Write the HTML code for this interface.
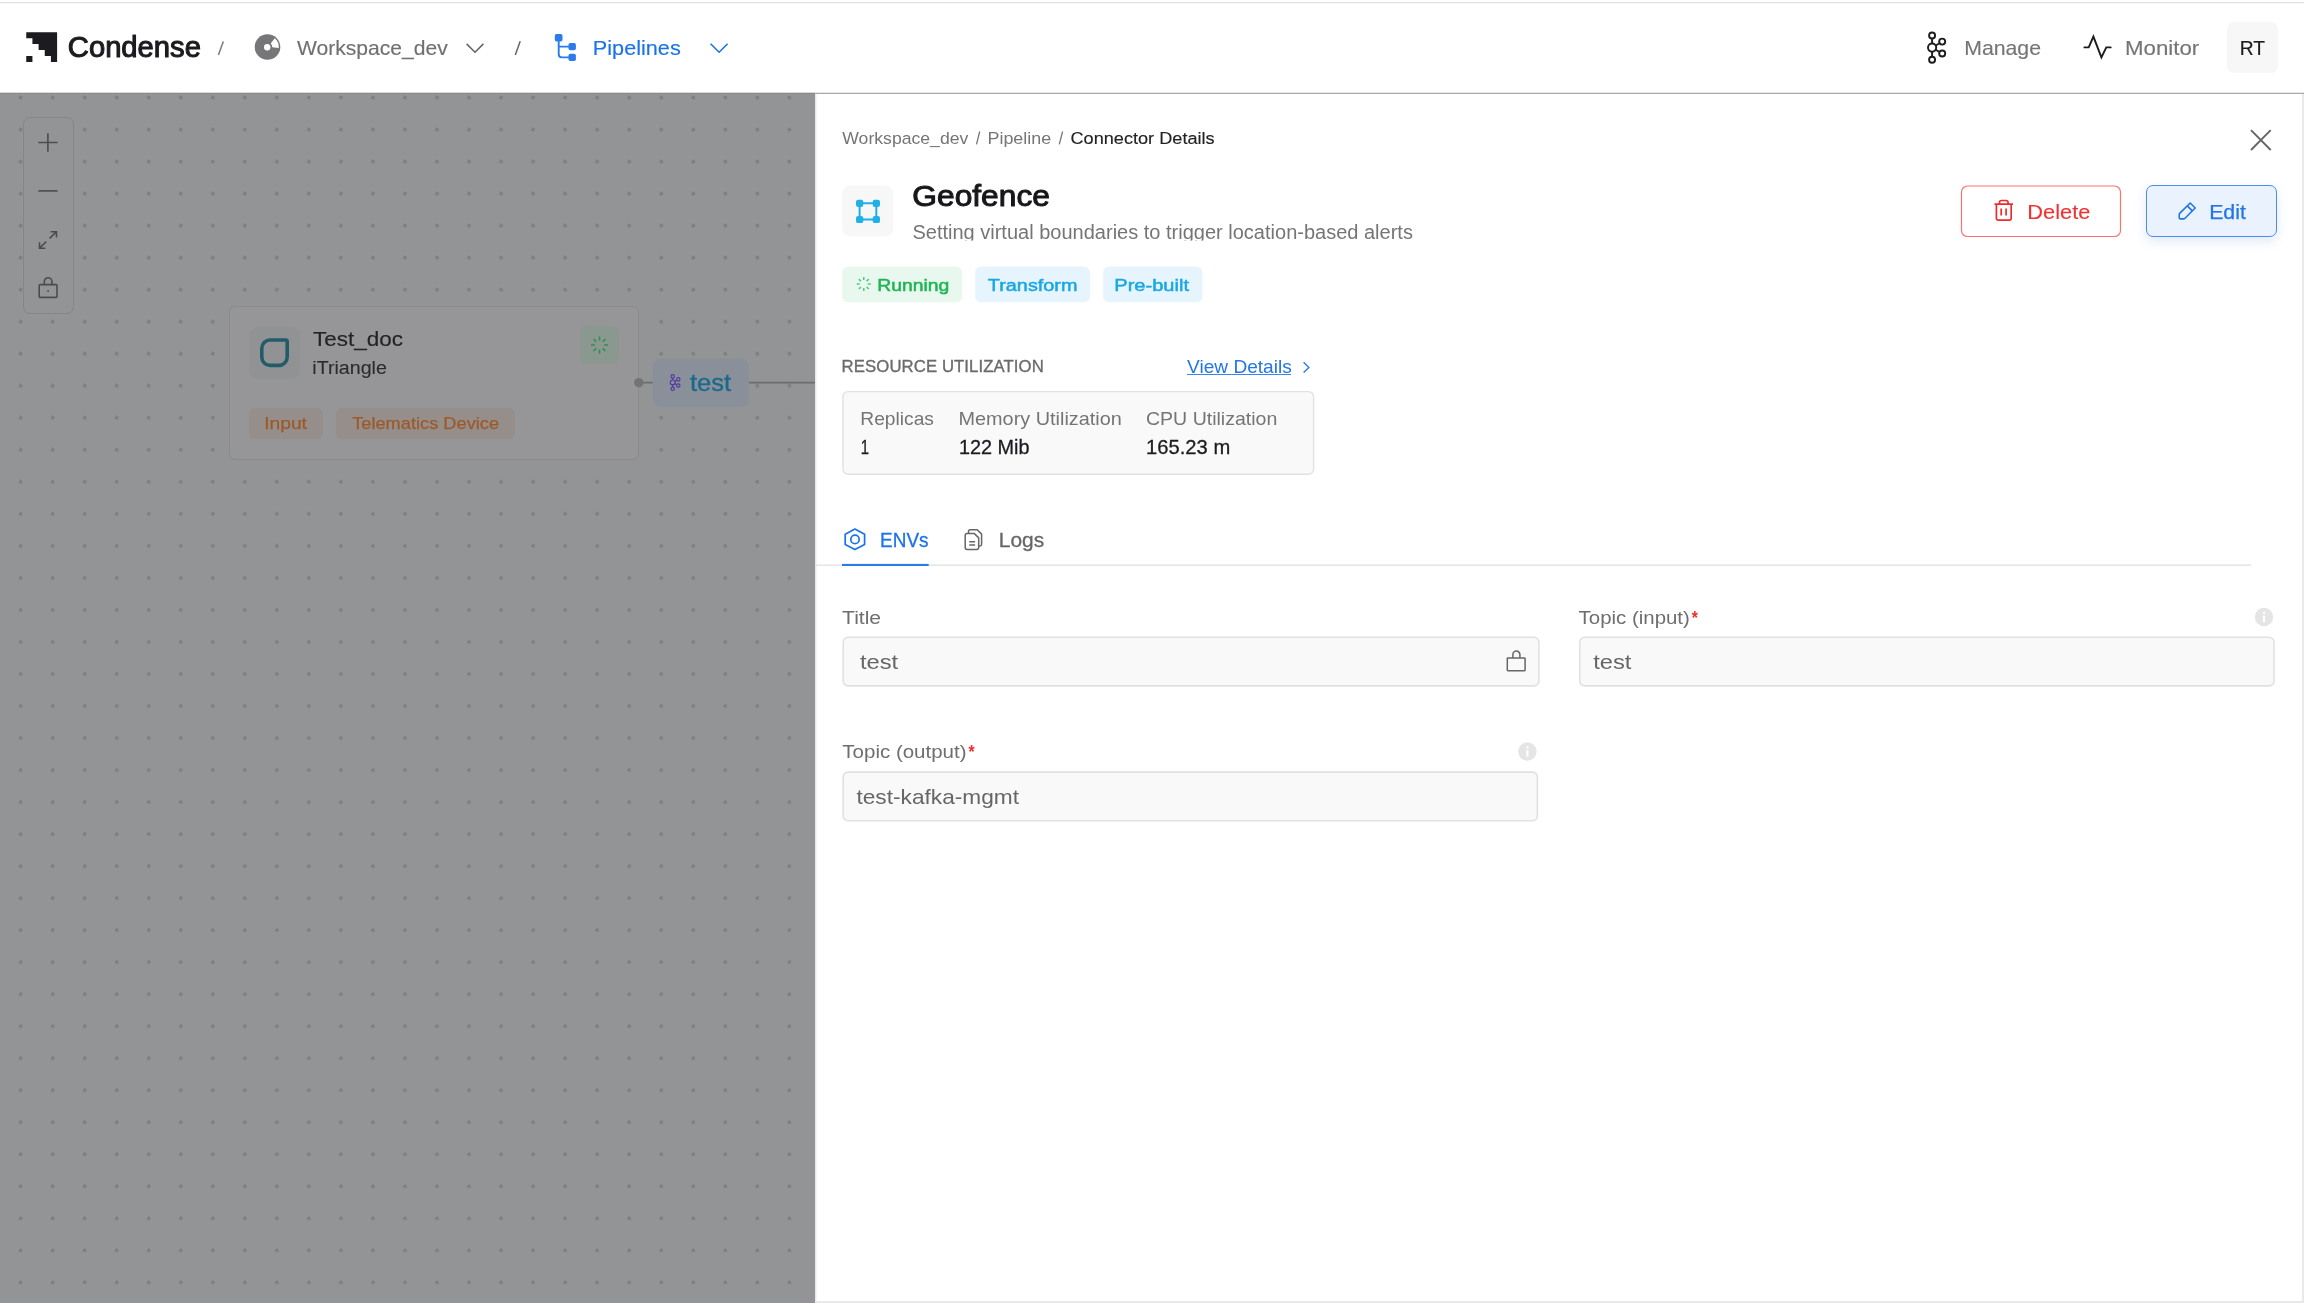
<!DOCTYPE html>
<html><head><meta charset="utf-8"><title>Condense</title>
<style>
html,body{margin:0;padding:0}
body{width:2304px;height:1303px;position:relative;overflow:hidden;background:#fff;font-family:"Liberation Sans",sans-serif;}
.t{position:absolute;white-space:nowrap;font-family:"Liberation Sans",sans-serif;}
.a{position:absolute;}
svg{position:absolute;overflow:visible}
</style></head><body>

<div class="a" style="left:0;top:2px;width:2304px;height:1px;background:#dfe1df"></div>
<div class="a" style="left:0;top:3px;width:2304px;height:1px;background:#f6f7f6"></div>
<svg width="2304" height="100" style="left:0;top:0" fill="#1c1c20"><path d="M26.25 32.25L57.10 32.25L57.10 61.90L50.93 61.90L50.93 55.97L44.76 55.97L44.76 50.04L38.59 50.04L38.59 44.11L32.42 44.11L32.42 38.18L26.25 38.18Z M26.25 55.97L32.42 55.97L32.42 61.90L26.25 61.90Z"/></svg>
<svg width="2304" height="100" style="left:0;top:0" fill="none">
<line x1="218.4" y1="55.1" x2="223.3" y2="41.5" stroke="#7a7a7a" stroke-width="1.5"/>
<line x1="515.3" y1="55.1" x2="520.2" y2="41.3" stroke="#666" stroke-width="1.5"/>
<circle cx="267.5" cy="47.0" r="12.8" fill="#767678"/>
<circle cx="267.2" cy="47.2" r="3.2" fill="#fff"/>
<path d="M270.74 43.52 L274.73 38.37 A11.4 11.4 0 0 1 278.77 47.90 L272.30 47.31 A4.9 4.9 0 0 0 270.74 43.52 Z" fill="#fff"/>
<polyline points="466.6,43.9 475,52.2 483.4,43.9" stroke="#666" stroke-width="1.6"/>
<polyline points="710.6,43.8 719.1,52.2 727.6,43.8" stroke="#1a73e8" stroke-width="1.6"/>
<g fill="#2b7bea"><rect x="554.8" y="34" width="7.7" height="7.5" rx="1.8"/><rect x="568.5" y="43" width="7.4" height="7.3" rx="1.8"/><rect x="568.5" y="53.7" width="7.4" height="7.3" rx="1.8"/></g>
<path d="M558.7 41 V54.3 Q558.7 57.4 561.8 57.4 H569 M558.7 46.6 H569" stroke="#2b7bea" stroke-width="1.9"/>
<g stroke="#1c1c20" stroke-width="1.9"><circle cx="1932.1" cy="35.5" r="3.0"/><circle cx="1932.1" cy="47.6" r="4.1"/><circle cx="1932.1" cy="59.7" r="3.0"/><circle cx="1942.2" cy="41.6" r="3.0"/><circle cx="1942.2" cy="53.5" r="3.0"/><path d="M1932.1 38.6V43.4M1932.1 51.7V56.6M1935.7 45.5L1939.5 43.2M1935.7 49.7L1939.5 52"/></g>
<polyline points="2084.4,47.4 2088.7,47.4 2093.4,36.6 2101.4,57.4 2106.3,47.4 2110.7,47.4" stroke="#1c1c20" stroke-width="1.9" stroke-linejoin="miter" stroke-linecap="round"/>
</svg>
<div class="a" style="left:2227px;top:22px;width:51px;height:51px;border-radius:7px;background:#f7f7f8"></div>
<div class="a" style="left:0;top:92px;width:815px;height:1px;background:#d9d9da"></div>
<div class="a" style="left:0;top:93px;width:815px;height:1px;background:#8a8b8d"></div>
<div class="a" style="left:815px;top:92px;width:1489px;height:1px;background:#e6e7e8"></div>
<div class="a" style="left:815px;top:93px;width:1489px;height:1px;background:#a7a9ab"></div>
<div class="a" style="left:0;top:94px;width:815px;height:1209px;background:#939496"></div>
<svg width="815" height="1209" style="left:0;top:94px"><defs><pattern id="dots" x="4.6" y="-12.4" width="32.03" height="32.02" patternUnits="userSpaceOnUse"><circle cx="16" cy="16" r="1.85" fill="#7d7e80"/></pattern></defs><rect width="815" height="1209" fill="url(#dots)"/></svg>
<div class="a" style="left:23px;top:117px;width:49px;height:195px;border:1px solid #858688;border-radius:7px;background:#939496"></div>
<svg width="815" height="400" style="left:0;top:0" fill="none" stroke="#4b4c4f" stroke-width="1.6">
<path d="M38.3 142.5H57.6M47.9 133.3V151.7"/>
<path d="M38.3 190.9H57.6"/>
<path d="M49.6 238.4L56.3 231.9M50.6 231.7H56.5V237.6M46.2 241.6L39.7 248M45.4 248.2H39.5V242.3"/>
<rect x="39.2" y="284.6" width="17.8" height="12.8" rx="0.8"/><path d="M44.3 284.6V281.5A3.8 3.8 0 0 1 51.9 281.5V284.6"/><circle cx="48.1" cy="291" r="0.9" fill="#4b4c4f" stroke="none"/>
</svg>
<div class="a" style="left:229px;top:306px;width:408px;height:152px;border:1px solid #898a8c;border-radius:6px;background:#969698"></div>
<div class="a" style="left:249px;top:327px;width:51px;height:52px;border-radius:9px;background:#919294"></div>
<svg width="815" height="500" style="left:0;top:0" fill="none">
<path d="M270 340H285.6A1.6 1.6 0 0 1 287.2 341.6V356.9A8.5 8.5 0 0 1 278.7 365.4H270A8.2 8.2 0 0 1 261.8 357.2V348.2A8.2 8.2 0 0 1 270 340Z" stroke="#225c69" stroke-width="3.6" stroke-linejoin="round"/>
<rect x="580.5" y="325.8" width="38.2" height="38.2" rx="6" fill="#8a988f"/>
<path d="M604.10 345.00L608.00 345.00M602.75 348.25L605.51 351.01M599.50 349.60L599.50 353.50M596.25 348.25L593.49 351.01M594.90 345.00L591.00 345.00M596.25 341.75L593.49 338.99M599.50 340.40L599.50 336.50M602.75 341.75L605.51 338.99" stroke="#2b9150" stroke-width="1.5"/>
<path d="M638.8 382.6H653M749 382.6H815" stroke="#6c6d6f" stroke-width="1.7"/>
<circle cx="638.8" cy="382.6" r="4.7" fill="#727375"/>
<rect x="652.8" y="358.8" width="96.2" height="48.2" rx="8" fill="#899099"/>
<g stroke="#5439a2" stroke-width="1.15"><circle cx="672.7" cy="376.4" r="1.7"/><circle cx="672.7" cy="382.4" r="2.4"/><circle cx="672.7" cy="388.8" r="1.7"/><circle cx="678.3" cy="379.4" r="1.7"/><circle cx="678.3" cy="385.5" r="1.7"/><path d="M672.7 378.1V380M672.7 384.8V387.1M674.8 381.2L676.8 380.2M674.8 383.6L676.8 384.7"/></g>
</svg>
<div class="a" style="left:249.3px;top:407.6px;width:74px;height:31px;border-radius:6px;background:#958e8a"></div>
<div class="a" style="left:336.4px;top:407.6px;width:179px;height:31px;border-radius:6px;background:#958e8a"></div>
<div class="a" style="left:815px;top:94px;width:1489px;height:1209px;background:#fff"></div>
<div class="a" style="left:815px;top:94px;width:1px;height:1209px;background:#e9e9e9"></div>
<div class="a" style="left:816px;top:94px;width:1px;height:1209px;background:#f4f4f4"></div>
<div class="a" style="left:2302px;top:94px;width:2px;height:1209px;background:#e9e9e9"></div>
<div class="a" style="left:816px;top:1301px;width:1488px;height:2px;background:#e9e9e9"></div>
<svg width="1489" height="1209" style="left:815px;top:94px" fill="none"><g transform="translate(-815,-94)">
<path d="M976.5 144.4L979.7 131.5M1059.3 144.4L1062.6 131.5" stroke="#777" stroke-width="1.3"/>
<path d="M2251 130.2L2270.7 150M2270.7 130.2L2251 150" stroke="#666" stroke-width="1.9"/>
<rect x="842.4" y="185.6" width="50.8" height="50.8" rx="8" fill="#f7f7f8"/>
<path d="M859.6 203.2H876.3V219.5H859.6Z" stroke="#1fb0e8" stroke-width="2"/>
<g fill="#1fb0e8"><rect x="856" y="199.7" width="7.3" height="7.2" rx="2.2"/><rect x="872.7" y="199.7" width="7.3" height="7.2" rx="2.2"/><rect x="856" y="215.9" width="7.3" height="7.2" rx="2.2"/><rect x="872.7" y="215.9" width="7.3" height="7.2" rx="2.2"/></g>
<rect x="842.2" y="266.6" width="120.1" height="35.6" rx="6" fill="#e8f8ee"/>
<rect x="975.1" y="266.6" width="114.9" height="35.6" rx="6" fill="#e6f5fd"/>
<rect x="1103.1" y="266.6" width="99.3" height="35.6" rx="6" fill="#e6f5fd"/>
<path d="M867.75 284.10L870.75 284.10M866.58 286.93L868.70 289.05M863.75 288.10L863.75 291.10M860.92 286.93L858.80 289.05M859.75 284.10L856.75 284.10M860.92 281.27L858.80 279.15M863.75 280.10L863.75 277.10M866.58 281.27L868.70 279.15" stroke="#4fcb80" stroke-width="1.5"/>
<polyline points="1303.6,362.2 1308.9,367.4 1303.6,372.6" stroke="#2b7bea" stroke-width="1.4"/>
<rect x="843" y="391.6" width="470.6" height="82.6" rx="5" fill="#f9f9f9" stroke="#e2e2e2" stroke-width="1.4"/>
<rect x="816" y="564.4" width="1435" height="1.6" fill="#e6e6e6"/>
<rect x="842" y="563.9" width="86.7" height="2.1" fill="#2b7bea"/>
<polygon points="854.9,529.0 864.6,534.15 864.6,544.4499999999999 854.9,549.5999999999999 845.1999999999999,544.4499999999999 845.1999999999999,534.15" stroke="#1a73e8" stroke-width="1.7" stroke-linejoin="round"/>
<circle cx="855" cy="539.4" r="4.2" stroke="#1a73e8" stroke-width="1.7"/>
<g stroke="#666" stroke-width="1.5" stroke-linejoin="round"><path d="M968.5 533.2V531.5A1.8 1.8 0 0 1 970.3 529.7H977.2L981.6 534.1V544.3A1.8 1.8 0 0 1 979.8 546.1H979"/><path d="M967 533.6H974.4L978.7 537.9V547.6A1.8 1.8 0 0 1 976.9 549.4H967A1.8 1.8 0 0 1 965.2 547.6V535.4A1.8 1.8 0 0 1 967 533.6Z"/><path d="M969.3 541.7H975.1M969.3 545H975.1"/></g>
<rect x="843.1999999999999" y="637.3" width="695.6999999999999" height="48.6" rx="5" fill="#f9f9f9" stroke="#e1e1e1" stroke-width="1.6"/>
<rect x="1579.8" y="637.3" width="694.1999999999999" height="48.6" rx="5" fill="#f9f9f9" stroke="#e1e1e1" stroke-width="1.6"/>
<rect x="843.1999999999999" y="772.0999999999999" width="694.1999999999999" height="48.6" rx="5" fill="#f9f9f9" stroke="#e1e1e1" stroke-width="1.6"/>
<g stroke="#666" stroke-width="1.5"><rect x="1507.3" y="658" width="17.8" height="12.7" rx="0.6"/><path d="M1512.9 658V654.6A3.5 3.5 0 0 1 1519.9 654.6V658"/></g>
<circle cx="2264" cy="617" r="9.2" fill="#e5e5e5"/><rect x="2262.9" y="615.6" width="2.2" height="6.6" fill="#fff"/><rect x="2262.9" y="611.8" width="2.2" height="2.2" fill="#fff"/>
<circle cx="1527.4" cy="751.5" r="9.2" fill="#e5e5e5"/><rect x="1526.3000000000002" y="750.1" width="2.2" height="6.6" fill="#fff"/><rect x="1526.3000000000002" y="746.3" width="2.2" height="2.2" fill="#fff"/>
<rect x="1961.5" y="186" width="159" height="50.5" rx="6" fill="#fff" stroke="#f87272" stroke-width="1.2"/>
<g stroke="#ee2b2b" stroke-width="1.7" stroke-linejoin="round"><path d="M1994.5 204.2H2012.9M1999.5 204V202.4A1.9 1.9 0 0 1 2001.4 200.5H2006.2A1.9 1.9 0 0 1 2008.1 202.4V204"/><path d="M1996.4 204.4V218.6A1.6 1.6 0 0 0 1998 220.2H2009.6A1.6 1.6 0 0 0 2011.2 218.6V204.4"/><path d="M2001.2 208.6V215.6M2006.1 208.6V215.6"/></g>
</g></svg>
<div class="a" style="left:2146px;top:185px;width:129px;height:50px;border:1px solid #4a8df0;border-radius:7px;background:#eaf2fd;box-shadow:0 5px 12px rgba(40,90,180,0.13)"></div>
<svg width="40" height="40" style="left:2170px;top:195px" fill="none"><g transform="translate(-2170,-195)" stroke="#2274ea" stroke-width="1.6" stroke-linejoin="round"><path d="M2190.2 203L2195.2 208L2185 218.2Q2184.3 218.9 2183.3 218.9H2180.6Q2179.2 218.9 2179.2 217.5V214.8Q2179.2 213.8 2179.9 213.1Z"/><path d="M2187.3 205.9L2192.3 210.9"/></g></svg>
<div class="a" style="left:1187px;top:374px;width:104.2px;height:1px;background:#3a85ea"></div>
<svg width="2304" height="1303" style="left:0;top:0;will-change:transform" font-family="Liberation Sans, sans-serif"><defs><clipPath id="cd"><rect x="900" y="200" width="600" height="40.5"/></clipPath></defs>
<text x="67.80" y="57.10" font-size="28.6" fill="#1c1c20" textLength="133.15" lengthAdjust="spacingAndGlyphs" stroke="#1c1c20" stroke-width="1.05" stroke-linejoin="round">Condense</text>
<text x="297.00" y="54.70" font-size="20.2" fill="#707072" textLength="150.85" lengthAdjust="spacingAndGlyphs" stroke="#707072" stroke-width="0.15">Workspace_dev</text>
<text x="592.86" y="54.90" font-size="20.2" fill="#1a73e8" textLength="87.86" lengthAdjust="spacingAndGlyphs" stroke="#1a73e8" stroke-width="0.15">Pipelines</text>
<text x="1964.20" y="55.30" font-size="20.2" fill="#757577" textLength="76.78" lengthAdjust="spacingAndGlyphs" stroke="#757577" stroke-width="0.15">Manage</text>
<text x="2125.01" y="55.30" font-size="20.2" fill="#757577" textLength="74.29" lengthAdjust="spacingAndGlyphs" stroke="#757577" stroke-width="0.15">Monitor</text>
<text x="2239.84" y="55.30" font-size="20.0" fill="#1c1c20" textLength="25.25" lengthAdjust="spacingAndGlyphs" stroke="#1c1c20" stroke-width="0.2">RT</text>
<text x="313.08" y="346.25" font-size="20.3" fill="#232326" textLength="89.93" lengthAdjust="spacingAndGlyphs" stroke="#232326" stroke-width="0.15">Test_doc</text>
<text x="312.27" y="373.90" font-size="18.0" fill="#2b2b2e" textLength="74.64" lengthAdjust="spacingAndGlyphs" stroke="#2b2b2e" stroke-width="0.1">iTriangle</text>
<text x="264.19" y="429.00" font-size="16.9" fill="#9c5a2b" textLength="42.74" lengthAdjust="spacingAndGlyphs" stroke="#9c5a2b" stroke-width="0.25">Input</text>
<text x="352.20" y="429.00" font-size="16.9" fill="#9c5a2b" textLength="146.86" lengthAdjust="spacingAndGlyphs" stroke="#9c5a2b" stroke-width="0.25">Telematics Device</text>
<text x="689.93" y="390.50" font-size="23.2" fill="#1a6a8e" textLength="41.18" lengthAdjust="spacingAndGlyphs" stroke="#1a6a8e" stroke-width="0.35">test</text>
<text x="842.30" y="143.90" font-size="17.1" fill="#757577" textLength="126.00" lengthAdjust="spacingAndGlyphs">Workspace_dev</text>
<text x="987.46" y="143.90" font-size="17.1" fill="#757577" textLength="63.75" lengthAdjust="spacingAndGlyphs">Pipeline</text>
<text x="1070.51" y="143.90" font-size="17.1" fill="#222225" textLength="144.14" lengthAdjust="spacingAndGlyphs" stroke="#222225" stroke-width="0.15">Connector Details</text>
<text x="912.31" y="205.80" font-size="29.4" fill="#17171b" textLength="137.65" lengthAdjust="spacingAndGlyphs" stroke="#17171b" stroke-width="1.0" stroke-linejoin="round">Geofence</text>
<text x="912.42" y="238.70" font-size="20.0" fill="#757577" textLength="500.53" lengthAdjust="spacingAndGlyphs" clip-path="url(#cd)">Setting virtual boundaries to trigger location-based alerts</text>
<text x="877.36" y="291.10" font-size="17.2" fill="#1eb553" textLength="72.01" lengthAdjust="spacingAndGlyphs" stroke="#1eb553" stroke-width="0.5">Running</text>
<text x="987.87" y="291.10" font-size="17.2" fill="#19a6e4" textLength="89.57" lengthAdjust="spacingAndGlyphs" stroke="#19a6e4" stroke-width="0.5">Transform</text>
<text x="1114.30" y="291.10" font-size="17.2" fill="#19a6e4" textLength="74.68" lengthAdjust="spacingAndGlyphs" stroke="#19a6e4" stroke-width="0.5">Pre-built</text>
<text x="841.64" y="372.10" font-size="16.6" fill="#6b6b6d" textLength="202.26" lengthAdjust="spacingAndGlyphs" style="letter-spacing:0.093px" stroke="#6b6b6d" stroke-width="0.35">RESOURCE UTILIZATION</text>
<text x="1187.00" y="372.70" font-size="18.2" fill="#2176e8" textLength="104.81" lengthAdjust="spacingAndGlyphs">View Details</text>
<text x="860.25" y="424.60" font-size="18.2" fill="#757575" textLength="73.70" lengthAdjust="spacingAndGlyphs">Replicas</text>
<text x="958.50" y="424.60" font-size="18.2" fill="#757575" textLength="163.29" lengthAdjust="spacingAndGlyphs">Memory Utilization</text>
<text x="1145.96" y="424.60" font-size="18.2" fill="#757575" textLength="131.41" lengthAdjust="spacingAndGlyphs">CPU Utilization</text>
<text x="860.80" y="453.70" font-size="20.2" fill="#1c1c20" textLength="8.25" lengthAdjust="spacingAndGlyphs" stroke="#1c1c20" stroke-width="0.3">1</text>
<text x="958.93" y="453.70" font-size="20.2" fill="#1c1c20" textLength="70.65" lengthAdjust="spacingAndGlyphs" stroke="#1c1c20" stroke-width="0.3">122 Mib</text>
<text x="1146.11" y="453.70" font-size="20.2" fill="#1c1c20" textLength="84.07" lengthAdjust="spacingAndGlyphs" stroke="#1c1c20" stroke-width="0.3">165.23 m</text>
<text x="880.08" y="546.70" font-size="20.2" fill="#1a73e8" textLength="48.41" lengthAdjust="spacingAndGlyphs" stroke="#1a73e8" stroke-width="0.3">ENVs</text>
<text x="998.82" y="546.70" font-size="20.2" fill="#666668" textLength="45.36" lengthAdjust="spacingAndGlyphs" stroke="#666668" stroke-width="0.3">Logs</text>
<text x="842.08" y="623.50" font-size="18.9" fill="#6e6e6e" textLength="39.01" lengthAdjust="spacingAndGlyphs">Title</text>
<text x="1578.59" y="623.50" font-size="18.9" fill="#6e6e6e" textLength="111.29" lengthAdjust="spacingAndGlyphs">Topic (input)</text>
<text x="842.39" y="758.20" font-size="18.9" fill="#6e6e6e" textLength="124.11" lengthAdjust="spacingAndGlyphs">Topic (output)</text>
<text x="1691.70" y="623.60" font-size="17.5" fill="#f03030" textLength="6.14" lengthAdjust="spacingAndGlyphs" font-weight="700">*</text>
<text x="968.40" y="758.30" font-size="17.5" fill="#f03030" textLength="6.14" lengthAdjust="spacingAndGlyphs" font-weight="700">*</text>
<text x="859.91" y="669.10" font-size="20.8" fill="#666" textLength="38.21" lengthAdjust="spacingAndGlyphs">test</text>
<text x="1593.21" y="669.10" font-size="20.8" fill="#666" textLength="38.26" lengthAdjust="spacingAndGlyphs">test</text>
<text x="856.43" y="803.50" font-size="20.8" fill="#666" textLength="162.60" lengthAdjust="spacingAndGlyphs">test-kafka-mgmt</text>
<text x="2027.35" y="218.80" font-size="20.3" fill="#ef3333" textLength="63.13" lengthAdjust="spacingAndGlyphs" stroke="#ef3333" stroke-width="0.1">Delete</text>
<text x="2209.16" y="218.70" font-size="19.9" fill="#2274ea" textLength="36.74" lengthAdjust="spacingAndGlyphs" stroke="#2274ea" stroke-width="0.25">Edit</text>
</svg>
</body></html>
